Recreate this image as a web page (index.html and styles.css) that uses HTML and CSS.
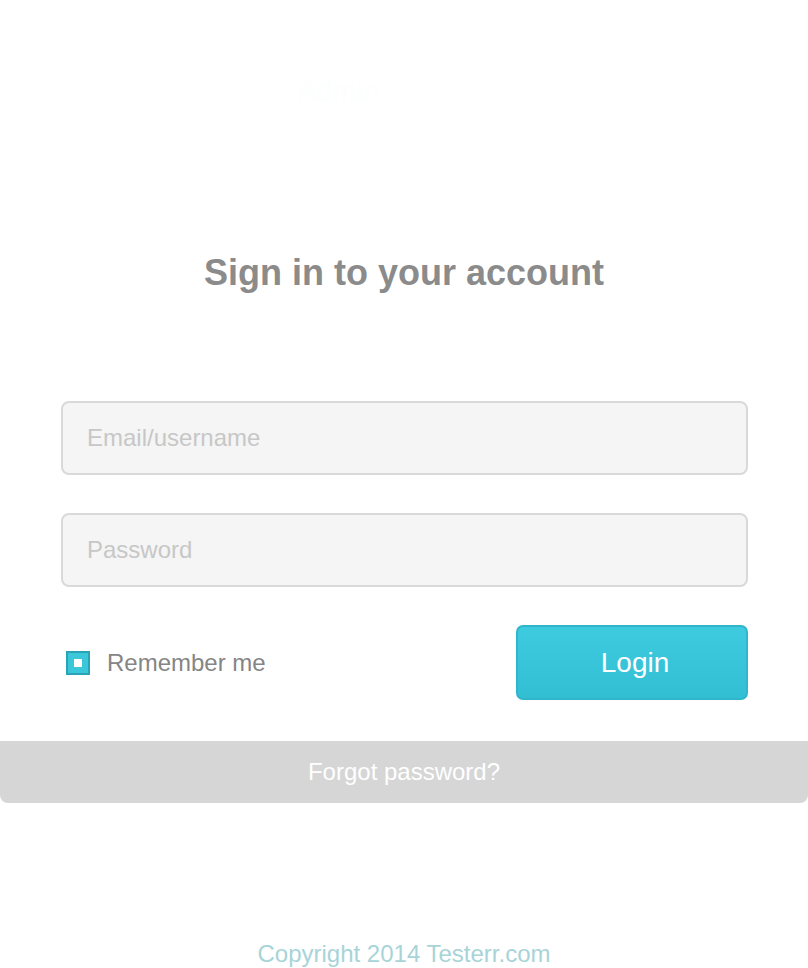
FILE: index.html
```html
<!DOCTYPE html>
<html>
<head>
<meta charset="utf-8">
<link rel="stylesheet" href="styles.css">
</head>
<body>
<div class="page">
  <div class="brand">Admin</div>
  <div class="card">
    <h1 class="title">Sign in to your account</h1>
    <form class="form">
      <input class="field" type="text" placeholder="Email/username">
      <input class="field" type="password" placeholder="Password">
      <div class="actions">
        <label class="remember">
          <span class="check"><span class="check-dot"></span></span>
          <span class="remember-text">Remember me</span>
        </label>
        <button class="login" type="button">Login</button>
      </div>
    </form>
    <div class="forgot">Forgot password?</div>
  </div>
  <div class="copyright">Copyright 2014 Testerr.com</div>
</div>
</body>
</html>
```

FILE: styles.css
```css
html, body {
  margin: 0;
  padding: 0;
  background: #ffffff;
  font-family: "Liberation Sans", Arial, sans-serif;
}
.page {
  width: 808px;
  display: flex;
  flex-direction: column;
}
.brand {
  color: #fdfefe;
  font-size: 29px;
  padding: 76px 0 0 297px;
  height: 42px;
  line-height: 30px;
}
.card {
  display: flex;
  flex-direction: column;
  margin-top: 135px;
}
.title {
  margin: 0;
  text-align: center;
  font-size: 36px;
  font-weight: bold;
  color: #8b8b8b;
  line-height: 40px;
}
.form {
  display: flex;
  flex-direction: column;
  gap: 38px;
  padding: 0 60px 0 61px;
  margin-top: 108px;
}
.field {
  box-sizing: border-box;
  height: 74px;
  width: 687px;
  margin: 0;
  border: 2px solid #d9d9d9;
  border-radius: 8px;
  background: #f5f5f5;
  padding: 0 0 0 24px;
  font-family: "Liberation Sans", Arial, sans-serif;
  font-size: 24px;
  color: #777;
  outline: none;
}
.field::placeholder {
  color: #c7c7c7;
}
.actions {
  display: flex;
  align-items: center;
  justify-content: space-between;
}
.remember {
  display: flex;
  align-items: center;
  gap: 17px;
  padding-left: 5px;
}
.check {
  box-sizing: border-box;
  width: 24px;
  height: 24px;
  background: #3bc7da;
  border: 2px solid #2aa3b5;
  display: flex;
  align-items: center;
  justify-content: center;
}
.check-dot {
  width: 8px;
  height: 8px;
  background: #ffffff;
}
.remember-text {
  font-size: 24px;
  color: #858585;
}
.login {
  box-sizing: border-box;
  width: 232px;
  height: 75px;
  border: 2px solid #2fb6cb;
  border-radius: 7px;
  background: linear-gradient(#3ecbdf, #33bfd3);
  color: #ffffff;
  font-family: "Liberation Sans", Arial, sans-serif;
  font-size: 28px;
  padding: 0 0 0 6px;
}
.forgot {
  margin-top: 41px;
  height: 62px;
  background: #d6d6d6;
  border-radius: 0 0 8px 8px;
  color: #ffffff;
  font-size: 24px;
  display: flex;
  align-items: center;
  justify-content: center;
}
.copyright {
  margin-top: 137px;
  text-align: center;
  font-size: 24px;
  color: #a8d4d8;
  line-height: 28px;
}
```
